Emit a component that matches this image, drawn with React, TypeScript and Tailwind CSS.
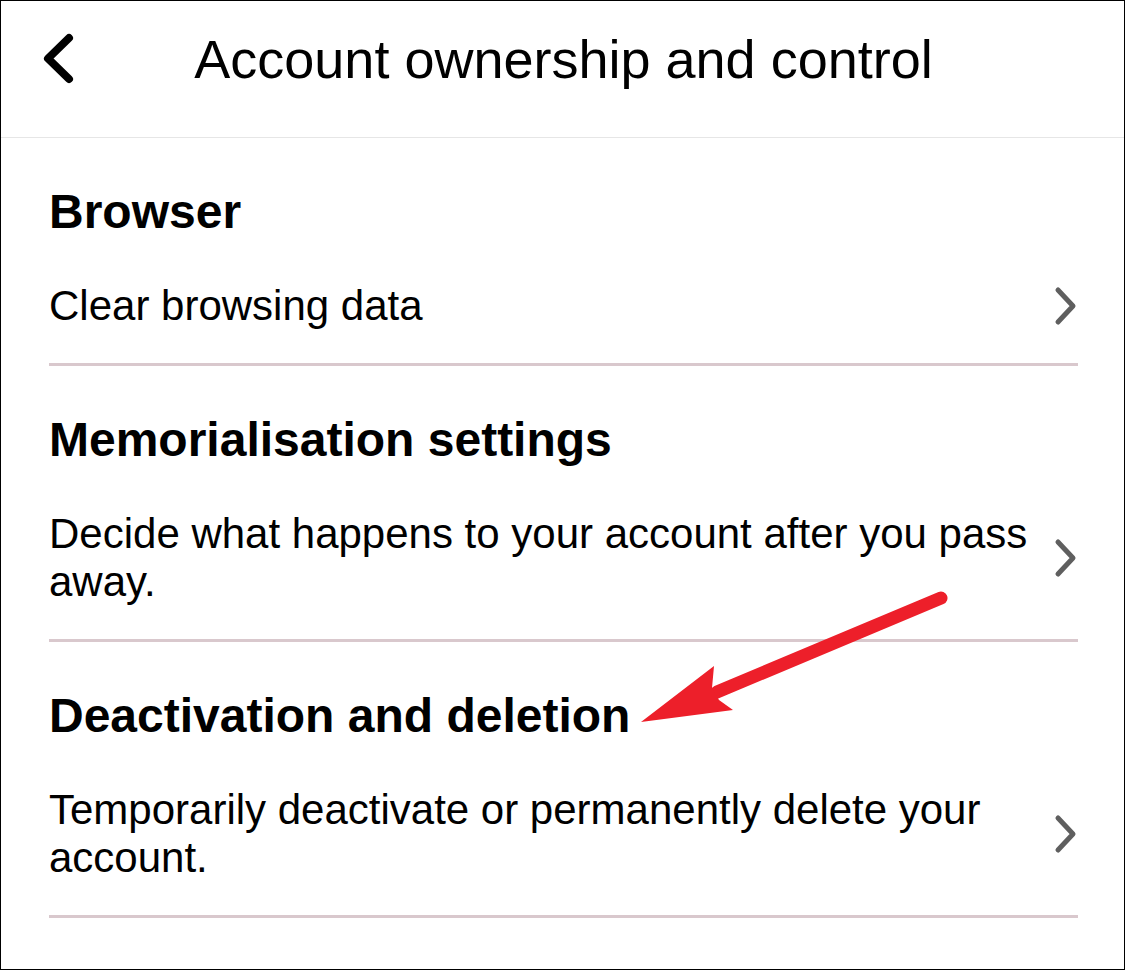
import React from 'react';

type Section = {
  title: string;
  text: string;
};

const sections: Section[] = [
  { title: 'Browser', text: 'Clear browsing data' },
  { title: 'Memorialisation settings', text: 'Decide what happens to your account after you pass away.' },
  { title: 'Deactivation and deletion', text: 'Temporarily deactivate or permanently delete your account.' },
];

const BackIcon = () => (
  <svg width="38" height="58" viewBox="0 0 38 58" fill="none">
    <polyline
      points="29,8 8,28.5 29,49"
      stroke="#000"
      strokeWidth="8"
      strokeLinecap="round"
      strokeLinejoin="round"
    />
  </svg>
);

const ChevronRight = () => (
  <svg width="26" height="40" viewBox="0 0 26 40" fill="none" className="shrink-0">
    <polyline
      points="6,4 21,20 6,36"
      stroke="#5f5f5f"
      strokeWidth="5"
      strokeLinecap="round"
      strokeLinejoin="round"
    />
  </svg>
);

const App: React.FC = () => {
  return (
    <div className="relative w-[1125px] h-[970px] border border-black bg-white overflow-hidden text-black font-['Liberation_Sans',Arial,sans-serif]">
      <header className="h-[137px] border-b border-[#e6e6e6] grid grid-cols-[1fr_auto_1fr] items-center pb-5">
        <div className="pl-[39px] flex items-center">
          <BackIcon />
        </div>
        <h1 className="text-[54px] leading-[62px] font-normal pl-[2px]">Account ownership and control</h1>
        <div />
      </header>

      <div className="ml-[48px] mr-[46px]">
        {sections.map((s) => (
          <section key={s.title} className="pt-[46px] pb-[33px] border-b-[3px] border-[#d9c8cd]">
            <h2 className="text-[48px] leading-[56px] font-bold">{s.title}</h2>
            <div className="mt-[42px] flex items-center justify-between gap-6">
              <p className="text-[42px] leading-[48px] max-w-[990px]">{s.text}</p>
              <ChevronRight />
            </div>
          </section>
        ))}
      </div>

      <svg
        className="absolute inset-0 pointer-events-none"
        width="1125"
        height="970"
        viewBox="0 0 1125 970"
      >
        <line x1="940" y1="597" x2="716" y2="691" stroke="#ed1f2a" strokeWidth="13" strokeLinecap="round" />
        <polygon points="640,721 713,665 711,687 718,699 732,709" fill="#ed1f2a" />
      </svg>
    </div>
  );
};

export default App;
